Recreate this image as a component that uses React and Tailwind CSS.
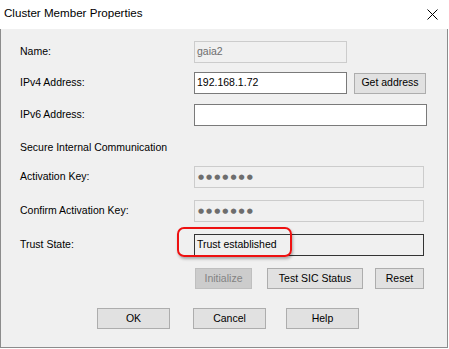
import React from 'react';

const btn =
  'h-[21px] flex items-center justify-center bg-[#e1e1e1] border border-[#adadad] text-black';

function Field({ width, kind = 'enabled', children }) {
  const styles = {
    enabled: 'bg-white border-[#7a7a7a] text-black',
    disabled: 'bg-[#f0f0f0] border-[#cccccc] text-[#6d6d6d]',
    readonly: 'bg-[#f0f0f0] border-[#333333] text-black',
  };
  return (
    <div
      className={`h-[22px] border flex items-center pl-[2px] ${styles[kind]}`}
      style={{ width }}
    >
      {children}
    </div>
  );
}

function Dots() {
  return (
    <span className="font-['DejaVu_Sans',sans-serif] text-[7px] tracking-[2px] text-[#6d6d6d] leading-none pl-[1px]">
      ●●●●●●●
    </span>
  );
}

function Row({ label, className = '', children }) {
  return (
    <div className={`flex items-center ${className}`}>
      <div className="w-[174px]">{label}</div>
      {children}
    </div>
  );
}

export default function App() {
  return (
    <div className="w-[449px] h-[349px] bg-white font-['Liberation_Sans',Arial,sans-serif] text-[10.5px] text-black">
      <div className="relative w-[448px] h-[348px] flex flex-col">
        {/* title bar */}
        <div className="h-[29px] flex items-center justify-between bg-white pl-[4px] pr-[10px] pb-[4px]">
          <span className="text-[11.6px] text-black">Cluster Member Properties</span>
          <svg width="11" height="11" viewBox="0 0 11 11" className="mt-[4px]">
            <path d="M0.5 0.5 L10.5 10.5 M10.5 0.5 L0.5 10.5" stroke="#000" strokeWidth="1" />
          </svg>
        </div>

        {/* body */}
        <div className="flex-1 bg-[#f0f0f0] border-x border-b border-[#8c8c8c] flex flex-col pt-[12px] pl-[19px]">
          <Row label="Name:">
            <Field width={153} kind="disabled">gaia2</Field>
          </Row>
          <Row label="IPv4 Address:" className="mt-[9px]">
            <Field width={153}>192.168.1.72</Field>
            <button className={`${btn} w-[72px] ml-[7px]`}>Get address</button>
          </Row>
          <Row label="IPv6 Address:" className="mt-[10px]">
            <Field width={233} />
          </Row>
          <div className="h-[22px] mt-[11px] flex items-center">Secure Internal Communication</div>
          <Row label="Activation Key:" className="mt-[7px]">
            <Field width={230} kind="disabled">
              <Dots />
            </Field>
          </Row>
          <Row label="Confirm Activation Key:" className="mt-[12px]">
            <Field width={230} kind="disabled">
              <Dots />
            </Field>
          </Row>
          <Row label="Trust State:" className="mt-[12px]">
            <Field width={230} kind="readonly">Trust established</Field>
          </Row>

          <div className="flex mt-[12px] ml-[175px]">
            <button className="h-[21px] w-[57px] flex items-center justify-center bg-[#cccccc] border border-[#bfbfbf] text-[#838383]">
              Initialize
            </button>
            <button className={`${btn} w-[96px] ml-[15px]`}>Test SIC Status</button>
            <button className={`${btn} w-[49px] ml-[12px]`}>Reset</button>
          </div>

          <div className="flex mt-[19px] ml-[77px]">
            <button className={`${btn} w-[73px]`}>OK</button>
            <button className={`${btn} w-[73px] ml-[23px]`}>Cancel</button>
            <button className={`${btn} w-[73px] ml-[20px]`}>Help</button>
          </div>
        </div>

        {/* annotation */}
        <div className="absolute left-[177px] top-[227px] w-[115px] h-[30px] border-2 border-[#ee1111] rounded-[7px] shadow-[1px_2px_3px_rgba(0,0,0,0.3)]" />
      </div>
    </div>
  );
}
